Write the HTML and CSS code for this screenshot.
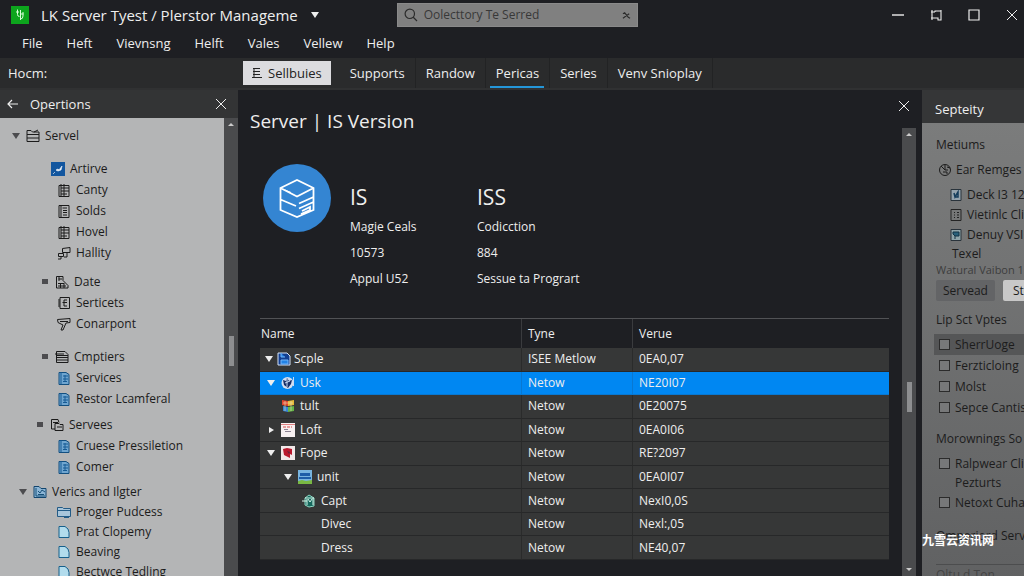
FILE: index.html
```html
<!DOCTYPE html>
<html lang="en">
<head>
    <meta charset="UTF-8">
    <meta name="viewport" content="width=device-width, initial-scale=1.0">
    <title>Server | IS Version</title>
    <link rel="stylesheet" href="styles.css">
</head>
<body>
    <svg class="sprite" aria-hidden="true">
        <symbol id="close" viewBox="0 0 12 12"><path d="M1 1l10 10M11 1L1 11" fill="none" stroke="currentColor" stroke-width="1"/></symbol>
        <symbol id="down" viewBox="0 0 10 10"><path d="M1 2h8L5 8z" fill="currentColor"/></symbol>
        <symbol id="right" viewBox="0 0 10 10"><path d="M3 2l5 3-5 3z" fill="currentColor"/></symbol>
        <symbol id="bullet" viewBox="0 0 10 10"><path d="M2 2h6v5H2z" fill="currentColor"/></symbol>
        <symbol id="folder" viewBox="0 0 14 14"><path d="M1 12.500V1.500h4l1.500 1.500H13v9.500zM1 5.500h12M1 9h12M8 3l4-2" fill="none" stroke="currentColor"/></symbol>
        <symbol id="active" viewBox="0 0 14 14"><path d="M0 0h14v14H0z" fill="#12569f"/><path d="M5 8l2-1 1 1 3-4-1 4-3 1zM2 12l2-2" fill="#fff" stroke="#dfeaf5" stroke-width=".7"/></symbol>
        <symbol id="sheet" viewBox="0 0 14 14"><path d="M2 2.500h10v11H2zM4 1v12M7 1v12M4 5h8M4 8h8M4 11h6" fill="none" stroke="currentColor"/></symbol>
        <symbol id="doc" viewBox="0 0 14 14"><path d="M2 1.500h10v12H2zM4 1v12M5.500 4H10M6 6.500h4M6 8.500h4M6 11h4" fill="none" stroke="currentColor"/></symbol>
        <symbol id="link" viewBox="0 0 14 14"><path d="M5.500 2.500L13 1.500v5H5.500zM1.500 7.500h5v3h-5zM4 11v2H1M10 7v4H7" fill="none" stroke="currentColor"/></symbol>
        <symbol id="report" viewBox="0 0 14 14"><path d="M1.500 13V1.500H8v4l5 5V13zM3.500 4H7M4 2v4M3 8.500h6M3 11h8M5.500 8v5M9 8v5" fill="none" stroke="currentColor"/></symbol>
        <symbol id="page" viewBox="0 0 14 14"><path d="M3 1.500h9.500v11H3zM10 4H7v6h3M5.500 6.500H10M2 3v8" fill="none" stroke="currentColor"/></symbol>
        <symbol id="funnel" viewBox="0 0 14 14"><path d="M.5 2.500L13 1.500v4L9 6l-3 7H4l2-5-5-2.500zM3 4.500h8" fill="none" stroke="currentColor"/></symbol>
        <symbol id="stack" viewBox="0 0 14 14"><path d="M1.500 1.500H10l3 3v8H1.500zM1 5.500h12M1 7.500h12M1 10h12M0 4h9" fill="none" stroke="currentColor"/></symbol>
        <symbol id="copy" viewBox="0 0 14 14"><path d="M5 11H1.500V1.500H8l1 3M3 4.500h5M5 12.500v-7h4l1 1h3v6zM7 9h5" fill="none" stroke="currentColor"/></symbol>
        <symbol id="bluedoc" viewBox="0 0 14 14"><path d="M2 1.500h7l3 2v10H2z" fill="#6fa5cf" stroke="#124f80"/><path d="M4 1v12M6 5h5M6 8h5M6 10.500h4M8 4v7" fill="none" stroke="#175b94"/></symbol>
        <symbol id="chart" viewBox="0 0 14 14"><path d="M1 1.500h5l2 2h5v9H1z" fill="#8cb5d5" stroke="#12456e"/><path d="M3 3v8h9M5 6l2 2 2-3 3 2M5 9.500h6" fill="none" stroke="#175078"/></symbol>
        <symbol id="bluefolder" viewBox="0 0 14 14"><path d="M.5 2.500h5l1 1h7v8H.5zM1 5.500h12M7 12.500h5" fill="#a8c5da" stroke="#235b86"/></symbol>
        <symbol id="tag" viewBox="0 0 14 14"><path d="M2 1.500h6q4 2 4 6v5H2z" fill="#b2dced" stroke="#17608c"/></symbol>
    </svg>

    <header class="titlebar">
        <svg class="logo" viewBox="0 0 18 18"><path d="M0 0h18v18H0z" fill="#0da51d"/><path d="M6.500 3.500v5q0 2 2 2M9.500 4v10M5 6h3M9 8h3.500M12 6v4q0 3-2.500 3" fill="none" stroke="#d9ffd9"/></svg>
        <h1>LK Server Tyest / Plerstor Manageme</h1>
        <svg class="caret"><use href="#down"/></svg>
        <label class="search">
            <svg class="lens" viewBox="0 0 14 14"><path d="M9.500 9.500L13 13M10.500 5.800a4.700 4.700 0 1 1-9.400 0a4.700 4.700 0 1 1 9.400 0" fill="none" stroke="currentColor" stroke-width="1.200"/></svg>
            <input type="text" aria-label="Search" placeholder="Oolecttory Te Serred">
            <svg class="clear" viewBox="0 0 10 10"><path d="M1 3l2-1 4 5 2 1M1 8l7-5" fill="none" stroke="currentColor" stroke-width="1.200"/></svg>
        </label>
        <div class="window-buttons">
            <button aria-label="Minimize"><svg viewBox="0 0 12 12"><path d="M0 6h12" stroke="currentColor" stroke-width="1.400"/></svg></button>
            <button aria-label="Snap"><svg viewBox="0 0 12 12"><path d="M2 1v10M1 3h4M5 3V2h6v9H8V9H1M11 1v10" fill="none" stroke="currentColor" stroke-width="1.100"/></svg></button>
            <button aria-label="Maximize"><svg viewBox="0 0 12 12"><path d="M1 1h10v10H1z" fill="none" stroke="currentColor" stroke-width="1.200"/></svg></button>
            <button aria-label="Close"><svg><use href="#close"/></svg></button>
        </div>
    </header>

    <nav class="menu">
        <button>File</button>
        <button>Heft</button>
        <button>Vievnsng</button>
        <button>Helft</button>
        <button>Vales</button>
        <button>Vellew</button>
        <button>Help</button>
    </nav>

    <div class="ribbon">
        <span class="ribbon-label">Hocm:</span>
        <button class="primary"><svg viewBox="0 0 10 12"><path d="M1 1.500h7M1 4.500h7M1 7.500h7M0 10.500h10M2 1v9" fill="none" stroke="currentColor"/></svg>Sellbuies</button>
        <nav class="tabs">
            <button>Supports</button>
            <button>Randow</button>
            <button class="current">Pericas</button>
            <button>Series</button>
            <button>Venv Snioplay</button>
        </nav>
    </div>

    <div class="workspace">
        <aside class="sidebar">
            <div class="sidebar-head">
                <button aria-label="Back"><svg viewBox="0 0 12 12"><path d="M11 6H1M5 2L1 6l4 4" fill="none" stroke="currentColor" stroke-width="1.200"/></svg></button>
                <h2>Opertions</h2>
                <button aria-label="Close"><svg><use href="#close"/></svg></button>
            </div>
            <div class="sidebar-body">
                <div class="tree">
                    <ul>
                        <li class="root"><svg class="arrow"><use href="#down"/></svg><svg><use href="#folder"/></svg>Servel</li>
                    </ul>
                    <ul class="far">
                        <li class="item"><svg><use href="#active"/></svg>Artirve</li>
                        <li class="leaf"><svg><use href="#sheet"/></svg>Canty</li>
                        <li class="leaf"><svg><use href="#doc"/></svg>Solds</li>
                        <li class="leaf"><svg><use href="#sheet"/></svg>Hovel</li>
                        <li class="leaf"><svg><use href="#link"/></svg>Hallity</li>
                    </ul>
                    <ul class="mid">
                        <li class="branch"><svg class="arrow"><use href="#bullet"/></svg><svg><use href="#report"/></svg>Date</li>
                        <li class="leaf"><svg><use href="#page"/></svg>Serticets</li>
                        <li class="leaf"><svg><use href="#funnel"/></svg>Conarpont</li>
                    </ul>
                    <ul class="far">
                        <li class="branch"><svg class="arrow"><use href="#bullet"/></svg><svg><use href="#stack"/></svg>Cmptiers</li>
                        <li class="leaf"><svg><use href="#bluedoc"/></svg>Services</li>
                        <li class="leaf"><svg><use href="#bluedoc"/></svg>Restor Lcamferal</li>
                    </ul>
                    <ul class="near">
                        <li class="subbranch"><svg class="arrow"><use href="#bullet"/></svg><svg><use href="#copy"/></svg>Servees</li>
                        <li class="leaf"><svg><use href="#bluedoc"/></svg>Cruese Pressiletion</li>
                        <li class="leaf"><svg><use href="#bluedoc"/></svg>Comer</li>
                    </ul>
                    <ul class="near tight">
                        <li class="second"><svg class="arrow"><use href="#down"/></svg><svg><use href="#chart"/></svg>Verics and Ilgter</li>
                        <li class="leaf"><svg><use href="#bluefolder"/></svg>Proger Pudcess</li>
                        <li class="leaf"><svg><use href="#tag"/></svg>Prat Clopemy</li>
                        <li class="leaf"><svg><use href="#tag"/></svg>Beaving</li>
                        <li class="leaf"><svg><use href="#tag"/></svg>Bectwce Tedling</li>
                    </ul>
                </div>
                <div class="scrollbar"><span class="tip up"></span><span class="thumb"></span></div>
            </div>
        </aside>

        <main class="content">
            <div class="content-head">
                <h2>Server | IS Version</h2>
                <button aria-label="Close"><svg><use href="#close"/></svg></button>
            </div>
            <div class="content-body">
                <div class="details">
                    <section class="summary">
                        <svg class="badge" viewBox="0 0 68 68"><circle cx="34" cy="34" r="34" fill="#3485d2"/><path d="M17.500 24L34 16l16.500 8v22L34 53l-16.500-7zM17.500 24L34 32.500 50.500 24M17.500 35.500L33 42M50.500 33L36 39.500M50.500 38L36 44.500M38 50l9-4v-3l-8 4" fill="none" stroke="#fff" stroke-width="1.800"/><path d="M22 26l6 2.500" stroke="#fff"/></svg>
                        <div class="facts">
                            <h3>IS</h3>
                            <p>Magie Ceals</p>
                            <p>10573</p>
                            <p>Appul U52</p>
                        </div>
                        <div class="facts">
                            <h3>ISS</h3>
                            <p>Codicction</p>
                            <p>884</p>
                            <p>Sessue ta Progrart</p>
                        </div>
                    </section>
                    <div class="table-wrap">
                        <table>
                            <thead>
                                <tr><th class="name">Name</th><th class="type">Tyne</th><th>Verue</th></tr>
                            </thead>
                            <tbody>
                                <tr><td><div class="cell"><svg class="arrow"><use href="#down"/></svg><svg viewBox="0 0 14 14"><path d="M1 1h9l3 3v9H1z" fill="#123f91" stroke="#d5e3f5"/><path d="M4 1v4h4M4 8h7v4H4z" fill="#2282e5" stroke="#72b5f7"/></svg>Scple</div></td><td>ISEE Metlow</td><td>0EA0,07</td></tr>
                                <tr class="selected"><td><div class="cell step"><svg class="arrow"><use href="#down"/></svg><svg viewBox="0 0 14 14"><circle cx="6.500" cy="7" r="6" fill="#d3def0"/><path d="M2 4l3 1 1-3 2 3 3-1-1 4-3 4-4-3z" fill="#182e67"/><path d="M4 7l5-2M6 3v8M12.500 1v9" fill="none" stroke="#c7d8f2"/></svg>Usk</div></td><td>Netow</td><td>NE20I07</td></tr>
                                <tr><td><div class="cell step"><span class="arrow"></span><svg viewBox="0 0 14 14"><path d="M1 1l6 1v5L1 6z" fill="#e3462f"/><path d="M7 2l6-1v5L7 7z" fill="#e8b937"/><path d="M2 7l5 1v5l-5-1z" fill="#3887d4"/><path d="M7 8l6-1v5l-6 1z" fill="#65b548"/><path d="M2 4h10M4 2v10M10 2v10" stroke="#e7ddba" stroke-width=".6"/></svg>tult</div></td><td>Netow</td><td>0E20075</td></tr>
                                <tr><td><div class="cell step"><svg class="arrow"><use href="#right"/></svg><svg viewBox="0 0 14 14"><path d="M0 0h14v14H0z" fill="#f7f0f0"/><path d="M0 1.500h14" stroke="#e08080"/><path d="M2 4h9" stroke="#d84b4b" stroke-dasharray="3 1"/><path d="M3 6.500h4M4 8.500h6" stroke="#8b8191"/></svg>Loft</div></td><td>Netow</td><td>0EA0I06</td></tr>
                                <tr><td><div class="cell step"><svg class="arrow"><use href="#down"/></svg><svg viewBox="0 0 14 14"><path d="M0 0h14v14H0z" fill="#f2e8e8"/><path d="M2 3l4-1 5 1v6l-2-1v4L3 9z" fill="#b9182c"/><path d="M6 5l3 1-1 2z" fill="#62243c"/></svg>Fope</div></td><td>Netow</td><td>RE?2097</td></tr>
                                <tr><td><div class="cell deep"><svg class="arrow"><use href="#down"/></svg><svg viewBox="0 0 14 14"><path d="M0 0h14v14H0z" fill="#78b4df"/><path d="M2 3h10v3H2zM1 7h12v2H1z" fill="#1d5da8"/><path d="M0 11l4-1 4 1 6-1v4H0z" fill="#79b843"/></svg>unit</div></td><td>Netow</td><td>0EA0I07</td></tr>
                                <tr><td><div class="cell deeper"><svg viewBox="0 0 14 14"><path d="M3 4l4-3 5 3v8l-5 1-4-2z" fill="#16695e" stroke="#8ed7c3"/><path d="M0 7h5M5 5v6M6 5l2 3 2-3M11 4v7M3 4h9" fill="none" stroke="#d4f5e8"/></svg>Capt</div></td><td>Netow</td><td>NexI0,0S</td></tr>
                                <tr><td><div class="cell deepest">Divec</div></td><td>Netow</td><td>Nexl:,05</td></tr>
                                <tr><td><div class="cell deepest">Dress</div></td><td>Netow</td><td>NE40,07</td></tr>
                            </tbody>
                        </table>
                    </div>
                </div>
                <div class="scrollbar"><span class="tip up"></span><span class="thumb"></span><span class="tip"></span></div>
            </div>
        </main>

        <aside class="inspector">
            <h2>Septeity</h2>
            <div class="inspector-body">
                <h3>Metiums</h3>
                <p class="option"><svg viewBox="0 0 14 14"><circle cx="7" cy="7" r="5.500" fill="none" stroke="currentColor"/><path d="M3 3l4 4V2M7 7h3M9 4l3 1M5 9h4v2" fill="none" stroke="currentColor"/></svg>Ear Remges</p>
                <ul class="resources">
                    <li><svg viewBox="0 0 14 14"><path d="M2 1.500h10v11H2z" fill="#96a4ae" stroke="#29333b"/><path d="M5 5l1 4 3-5v5H6" fill="none" stroke="#153d5c" stroke-width="1.500"/></svg>Deck I3 12</li>
                    <li><svg viewBox="0 0 14 14"><path d="M2 1.500h10v11H2z" fill="none" stroke="#242424"/><path d="M5 4.500h1M8 4.500h2M5 7h1M8 7h2M5 9.500h1M8 9.500h2" stroke="#202020"/></svg>Vietinlc Clis</li>
                    <li><svg viewBox="0 0 14 14"><path d="M2 1.500h10v11H2z" fill="#8fa5aa" stroke="#29333b"/><path d="M4 4h6v4H6L4 6zM6 8v3" fill="#28617b" stroke="#113345"/></svg>Denuy VSIE</li>
                    <li>Texel</li>
                </ul>
                <p class="note">Watural Vaibon 1.0</p>
                <div class="actions"><button>Servead</button><button class="light">Stop</button></div>
                <h3>Lip Sct Vptes</h3>
                <div class="checks">
                    <label class="picked"><input type="checkbox">SherrUoge</label>
                    <label><input type="checkbox">Ferzticloing</label>
                    <label><input type="checkbox">Molst</label>
                    <label><input type="checkbox">Sepce Cantis</label>
                </div>
                <h3>Morownings So</h3>
                <div class="checks">
                    <label><input type="checkbox">Ralpwear Clis</label>
                    <p>Pezturts</p>
                    <label><input type="checkbox">Netoxt Cuhat</label>
                </div>
                <h3 class="faded">Omperiord Serv</h3>
                <p class="footnote">Oltu d Ton</p>
            </div>
        </aside>
    </div>
    <div class="watermark" lang="zh">九雪云资讯网</div>
</body>
</html>
```
FILE: styles.css
```css
* {
    box-sizing: border-box;
}

body {
    font-family: "Open Sans", "Noto Sans CJK SC", sans-serif;
    font-size: 12px;
    line-height: 20px;
    margin: 0;
    height: 100vh;
    display: flex;
    flex-direction: column;
    overflow: hidden;
    color: #eee;
    background-color: #1e1f23;
}

h1, h2, h3, p, ul {
    margin: 0;
    padding: 0;
    font-weight: normal;
}

ul {
    list-style: none;
}

button {
    font: inherit;
    color: inherit;
    background: none;
    border: none;
    padding: 0;
    cursor: pointer;
}

svg {
    display: block;
    flex: none;
    width: 14px;
    height: 14px;
}

.sprite {
    position: absolute;
    width: 0;
    height: 0;
}

/* Title bar and menu */
.titlebar {
    display: flex;
    align-items: center;
    height: 30px;
    flex: none;
    padding: 0 6px 0 11px;
}

.logo {
    width: 18px;
    height: 18px;
}

h1 {
    font-size: 15px;
    margin-left: 12px;
    white-space: nowrap;
}

.caret {
    width: 10px;
    height: 10px;
    margin-left: 12px;
}

.search {
    display: flex;
    align-items: center;
    width: 241px;
    height: 24px;
    margin-left: 77px;
    padding: 0 6px;
    color: #2b2b2b;
    background-color: #808080;
    border: 1px solid #8a8a8a;
}

.search input {
    flex: 1;
    min-width: 0;
    font: inherit;
    border: none;
    background: none;
    padding: 0 6px;
    outline: none;
}

.search input::placeholder {
    color: #383838;
}

.clear {
    width: 9px;
    height: 9px;
}

.window-buttons {
    display: flex;
    gap: 26px;
    margin-left: auto;
}

.window-buttons svg,
.sidebar-head svg,
.content-head svg {
    width: 12px;
    height: 12px;
}

.menu {
    display: flex;
    gap: 24px;
    height: 28px;
    flex: none;
    padding: 0 22px 2px;
    font-size: 13px;
}

/* Ribbon */
.ribbon {
    display: flex;
    align-items: center;
    flex: none;
    height: 32px;
    font-size: 13px;
    background-color: #2a2b2c;
    border-bottom: 2px solid #303132;
}

.ribbon-label {
    width: 235px;
    padding-left: 8px;
}

.primary {
    display: flex;
    align-items: center;
    gap: 6px;
    height: 24px;
    margin-left: 8px;
    padding: 0 9px;
    color: #222;
    background-color: #dcdcdf;
}

.primary svg {
    width: 10px;
    height: 12px;
}

.tabs {
    display: flex;
    height: 100%;
    margin-left: 9px;
}

.tabs button {
    padding: 0 10px;
    border-right: 1px solid #222324;
}

.tabs .current {
    background: linear-gradient(#2496d8, #2496d8) center bottom / 54px 2px no-repeat;
}

.workspace {
    flex: 1;
    min-height: 0;
    display: grid;
    grid-template-columns: 238px minmax(0, 1fr) 102px;
    grid-template-rows: minmax(0, 1fr);
}

/* Tree on the left */
.sidebar,
.content,
.inspector {
    display: flex;
    flex-direction: column;
    min-height: 0;
    overflow: hidden;
}

.sidebar-head {
    display: flex;
    align-items: center;
    flex: none;
    height: 28px;
    padding: 0 11px 0 7px;
    background-color: #333435;
}

.sidebar-head h2 {
    flex: 1;
    margin-left: 11px;
    font-size: 13px;
}

.sidebar-body {
    display: flex;
    flex: 1;
    min-height: 0;
}

.tree {
    flex: 1;
    padding-top: 7px;
    overflow: hidden;
    color: #1b1b1b;
    background-color: #b4b5b6;
}

.tree li {
    display: flex;
    align-items: center;
    height: 21px;
    gap: 5px;
    white-space: nowrap;
}

.tree .far {
    margin-top: 12px;
}

.tree .mid {
    margin-top: 8px;
}

.tree .near {
    margin-top: 5px;
}

.tree .tight li {
    height: 20px;
}

.arrow {
    width: 10px;
    height: 10px;
    flex: none;
}

.tree .arrow {
    color: #4c4c4f;
}

.tree .root {
    padding-left: 11px;
}

.tree .second {
    padding-left: 18px;
}

.tree .subbranch {
    padding-left: 35px;
}

.tree .branch {
    padding-left: 40px;
}

.tree .item {
    padding-left: 51px;
}

.tree .leaf {
    padding-left: 57px;
}

.scrollbar {
    display: flex;
    flex-direction: column;
    align-items: center;
    width: 14px;
    flex: none;
    padding: 5px 0;
    background-color: #4a4b4d;
}

.tip {
    border: 3px solid transparent;
    border-top-color: #ccc;
    border-bottom: none;
}

.tip.up {
    border-top: none;
    border-bottom: 3px solid #ccc;
}

.thumb {
    width: 5px;
    height: 30px;
    background-color: #8d8e90;
}

.sidebar .thumb {
    margin-top: 210px;
}

/* Main pane */
.content {
    padding-right: 6px;
}

.content-head {
    display: flex;
    justify-content: space-between;
    flex: none;
    height: 38px;
    padding: 0 6px 0 12px;
}

.content-head h2 {
    font-size: 19px;
    line-height: 62px;
}

.content-head button {
    height: 32px;
}

.content-body {
    display: flex;
    flex: 1;
    min-height: 0;
}

.content .thumb {
    margin-top: 246px;
    margin-bottom: auto;
}

.details {
    display: flex;
    flex-direction: column;
    flex: 1;
    min-width: 0;
    padding: 36px 13px 16px 22px;
}

.summary {
    display: flex;
    flex: none;
    height: 154px;
    padding-left: 3px;
}

.badge {
    width: 68px;
    height: 68px;
}

.facts {
    width: 127px;
    margin-left: 19px;
    white-space: nowrap;
}

.facts + .facts {
    margin-left: 0;
}

.facts h3 {
    font-size: 21px;
    line-height: 28px;
    padding-top: 19px;
    margin-bottom: 3px;
}

.facts p {
    line-height: 26px;
}

.table-wrap {
    flex: 1;
    min-height: 0;
}

table {
    width: 100%;
    height: 100%;
    table-layout: fixed;
    border-collapse: separate;
    border-spacing: 0;
    border-top: 1px solid #515255;
}

th {
    height: 29px;
    padding: 0 6px;
    font-weight: normal;
    text-align: left;
    border-right: 1px solid #3a3b3e;
}

th:last-child,
td:last-child {
    border-right: none;
}

th:first-child {
    padding-left: 1px;
}

.name {
    width: 262px;
}

.type {
    width: 111px;
}

td {
    padding: 0 6px;
    background-color: #363737;
    border-right: 1px solid #2a2b2b;
    border-bottom: 1px solid #272829;
}

td:first-child {
    padding: 0;
}

.selected td {
    background-color: #0087f2;
    border-color: #0878d2;
}

.cell {
    display: flex;
    align-items: center;
    gap: 3px;
    padding-left: 4px;
}

.cell.step {
    padding-left: 6px;
    gap: 5px;
}

.cell.deep {
    padding-left: 23px;
    gap: 5px;
}

.cell.deeper {
    padding-left: 42px;
    gap: 5px;
}

.cell.deepest {
    padding-left: 61px;
}

/* Pane on the right */
.inspector h2 {
    flex: none;
    height: 33px;
    padding: 9px 13px 0;
    font-size: 13px;
    background-color: #353637;
}

.inspector-body {
    flex: 1;
    padding: 12px 0 0 14px;
    white-space: nowrap;
    color: #1c1c1c;
    background: linear-gradient(#7b7c7c, #606162);
}

.inspector h3 {
    font-size: 12px;
}

.option,
.resources li,
.checks label {
    display: flex;
    align-items: center;
    gap: 4px;
}

.option {
    height: 30px;
    padding-left: 2px;
}

.resources {
    padding-left: 13px;
}

.resources li:last-child {
    height: 18px;
    padding-left: 3px;
}

.note {
    font-size: 11px;
    line-height: 14px;
    color: #3d3d3d;
}

.actions {
    display: flex;
    gap: 8px;
    margin: 3px 0 9px;
}

.actions button {
    height: 21px;
    padding: 0 7px;
    border-radius: 2px;
    background-color: #636466;
}

.actions .light {
    padding: 0 10px;
    background-color: #c8c8c8;
}

.checks {
    margin: 4px 0 11px -2px;
}

.checks label {
    height: 21px;
    gap: 5px;
    padding-left: 5px;
}

.checks p {
    line-height: 18px;
    padding-left: 21px;
}

.checks .picked {
    background-color: #555657;
}

input[type="checkbox"] {
    appearance: none;
    flex: none;
    width: 11px;
    height: 11px;
    margin: 0;
    border: 1px solid #2b2b2b;
    background-color: #777879;
}

.inspector .faded {
    padding-bottom: 18px;
    margin-top: 13px;
    border-bottom: 1px solid #4c4d4e;
}

.footnote {
    color: #444;
}

.watermark {
    position: absolute;
    right: 30px;
    bottom: 25px;
    font-weight: bold;
    color: #fff;
}
```
